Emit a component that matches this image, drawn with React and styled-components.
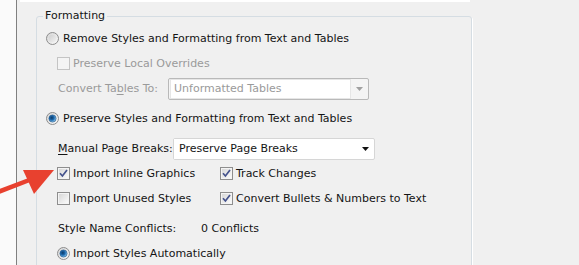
import React from 'react';
import styled, { createGlobalStyle } from 'styled-components';

const GlobalStyle = createGlobalStyle`
    html, body {
        margin: 0;
        padding: 0;
        background: #f0f0f0;
        overflow: hidden;
    }
    body {
        font-family: "DejaVu Sans", "Liberation Sans", sans-serif;
        font-size: 11px;
        color: #141414;
    }
`;

const Window = styled.div`
    position: relative;
    display: flex;
    width: 579px;
    height: 265px;
    overflow: hidden;
    background: #f0f0f0;
`;

const SideStrip = styled.div`
    flex: none;
    width: 16px;
    background: #fafafa;
    border-right: 1px solid #808080;
`;

const Main = styled.div`
    flex: 1;
    display: flex;
    flex-direction: column;
`;

const TopStrip = styled.div`
    flex: none;
    margin-left: 3px;
    width: 450px;
    height: 2px;
    background: #fff;
`;

const Group = styled.fieldset`
    flex: none;
    margin: 7px 0 0 19px;
    padding: 0 0 30px;
    width: 436px;
    min-width: 0;
    box-sizing: border-box;
    border: 1px solid #d5dde3;
    border-radius: 3px;
    box-shadow: 1px 1px 0 #fff;
`;

const Legend = styled.legend`
    margin-left: 6px;
    padding: 0 2px;
    line-height: 14px;
    color: #141414;
`;

const Content = styled.div`
    display: flex;
    flex-direction: column;
    padding: 3px 0 0 9px;
`;

const Row = styled.div`
    display: flex;
    align-items: center;
    height: 25px;
    margin-top: ${(p) => p.$gap || 0}px;
    padding-left: ${(p) => (p.$indent ? 11 : 0)}px;
`;

const Option = styled.div`
    display: flex;
    align-items: center;
    width: ${(p) => (p.$w ? `${p.$w}px` : 'auto')};
    flex: none;
`;

const Text = styled.span`
    margin-left: ${(p) => p.$ml ?? 0}px;
    color: ${(p) => (p.$disabled ? '#9a9a9a' : '#141414')};
    white-space: nowrap;
    line-height: 14px;
`;

const Label = styled.span`
    flex: none;
    width: ${(p) => p.$w}px;
    padding-left: 1px;
    box-sizing: border-box;
    color: ${(p) => (p.$disabled ? '#9a9a9a' : '#141414')};
    white-space: nowrap;
`;

const U = styled.span`
    text-decoration: underline;
    text-underline-offset: 2px;
`;

const Select = styled.div`
    display: flex;
    align-items: center;
    box-sizing: border-box;
    width: ${(p) => p.$w}px;
    height: 22px;
    border: 1px solid ${(p) => (p.$disabled ? '#b9b9b9' : '#d6d6d6')};
    border-radius: 2px;
    background: ${(p) => (p.$disabled ? '#f4f4f4' : '#fff')};
`;

const SelectField = styled.div`
    flex: 1;
    display: flex;
    align-items: center;
    height: ${(p) => (p.$disabled ? '18px' : '20px')};
    margin-left: ${(p) => (p.$disabled ? '1px' : '0')};
    padding-left: ${(p) => (p.$disabled ? '3px' : '5px')};
    background: #fff;
    border: ${(p) => (p.$disabled ? '1px solid #e6e6e6' : 'none')};
    color: ${(p) => (p.$disabled ? '#9a9a9a' : '#141414')};
    white-space: nowrap;
`;

const SelectButton = styled.div`
    flex: none;
    width: 17px;
    display: flex;
    align-items: center;
    justify-content: center;
`;

const ArrowOverlay = styled.svg`
    position: absolute;
    left: 0;
    top: 156px;
    pointer-events: none;
`;

const Radio = ({ checked }) => (
    <svg width="13" height="13" viewBox="0 0 13 13">
        <defs>
            <linearGradient id="rOuter" x1="0" y1="0" x2="1" y2="1">
                <stop offset="0" stopColor="#d4d4d4" />
                <stop offset="1" stopColor="#fbfbfb" />
            </linearGradient>
            <linearGradient id="rInner" x1="0" y1="0" x2="1" y2="1">
                <stop offset="0" stopColor="#cfcfcf" />
                <stop offset="1" stopColor="#f2f2f2" />
            </linearGradient>
            <radialGradient id="rDot" cx="0.4" cy="0.4" r="0.6">
                <stop offset="0" stopColor="#0b3a66" />
                <stop offset="0.55" stopColor="#1f6bb0" />
                <stop offset="1" stopColor="#8ccaf2" />
            </radialGradient>
        </defs>
        <circle cx="6.5" cy="6.5" r="6" fill="url(#rOuter)" stroke="#8d8d8d" />
        {checked ? (
            <circle cx="6.5" cy="6.5" r="3.6" fill="url(#rDot)" stroke="#1b4f80" strokeWidth="0.6" />
        ) : (
            <circle cx="6.5" cy="6.5" r="3.8" fill="url(#rInner)" />
        )}
    </svg>
);

const Checkbox = ({ checked, disabled }) => (
    <svg width="13" height="13" viewBox="0 0 13 13">
        <defs>
            <linearGradient id="cInner" x1="0" y1="0" x2="1" y2="1">
                <stop offset="0" stopColor="#d8d8d8" />
                <stop offset="1" stopColor="#fafafa" />
            </linearGradient>
        </defs>
        <rect x="0.5" y="0.5" width="12" height="12" fill="#f4f4f4" stroke={disabled ? '#c4c4c4' : '#8e8e8e'} />
        {!disabled && <rect x="2" y="2" width="9" height="9" fill="url(#cInner)" />}
        {checked && (
            <path d="M3 6.3 L5.4 9 L10 3" fill="none" stroke="#44528c" strokeWidth="1.7" />
        )}
    </svg>
);

const DropArrow = ({ color }) => (
    <svg width="7" height="4" viewBox="0 0 7 4">
        <path d="M0 0 H7 L3.5 4 Z" fill={color} />
    </svg>
);

const App = () => {
    return (
        <Window>
            <GlobalStyle />
            <SideStrip />
            <Main>
                <TopStrip />
                <Group>
                    <Legend>Formatting</Legend>
                    <Content>
                        <Row>
                            <Radio />
                            <Text $ml={4}>Remove Styles and Formatting from Text and Tables</Text>
                        </Row>
                        <Row $indent>
                            <Checkbox disabled />
                            <Text $ml={3} $disabled>Preserve Local Overrides</Text>
                        </Row>
                        <Row $indent>
                            <Label $w={111} $disabled>
                                Convert Ta<U>b</U>les To:
                            </Label>
                            <Select $w={201} $disabled>
                                <SelectField $disabled>Unformatted Tables</SelectField>
                                <SelectButton>
                                    <DropArrow color="#a0a0a0" />
                                </SelectButton>
                            </Select>
                        </Row>
                        <Row $gap={5}>
                            <Radio checked />
                            <Text $ml={4}>Preserve Styles and Formatting from Text and Tables</Text>
                        </Row>
                        <Row $indent $gap={5}>
                            <Label $w={116}>
                                <U>M</U>anual Page Breaks:
                            </Label>
                            <Select $w={202}>
                                <SelectField>Preserve Page Breaks</SelectField>
                                <SelectButton>
                                    <DropArrow color="#111" />
                                </SelectButton>
                            </Select>
                        </Row>
                        <Row $indent>
                            <Option $w={163}>
                                <Checkbox checked />
                                <Text $ml={3}>Import Inline Graphics</Text>
                            </Option>
                            <Option>
                                <Checkbox checked />
                                <Text $ml={3}>Track Changes</Text>
                            </Option>
                        </Row>
                        <Row $indent>
                            <Option $w={163}>
                                <Checkbox />
                                <Text $ml={3}>Import Unused Styles</Text>
                            </Option>
                            <Option>
                                <Checkbox checked />
                                <Text $ml={3}>Convert Bullets &amp; Numbers to Text</Text>
                            </Option>
                        </Row>
                        <Row $indent $gap={5}>
                            <Label $w={144}>Style Name Conflicts:</Label>
                            <Text>0 Conflicts</Text>
                        </Row>
                        <Row $indent>
                            <Radio checked />
                            <Text $ml={3}>Import Styles Automatically</Text>
                        </Row>
                    </Content>
                </Group>
            </Main>
            <ArrowOverlay width="60" height="45" viewBox="0 0 60 45">
                <line x1="-2" y1="36" x2="32" y2="23" stroke="#e8412f" strokeWidth="4.5" />
                <polygon points="54,14 23,14 34,38" fill="#e8412f" />
            </ArrowOverlay>
        </Window>
    );
};

export default App;
